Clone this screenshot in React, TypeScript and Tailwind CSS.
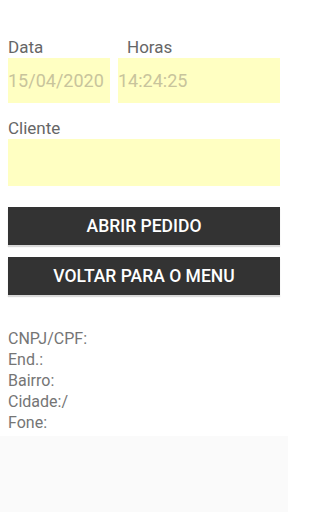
export default function App() {
  const info = ['CNPJ/CPF:', 'End.:', 'Bairro:', 'Cidade:/', 'Fone:']

  return (
    <div className="w-[288px] h-[512px] flex flex-col bg-[#fafafa] font-['Roboto',sans-serif]">
      <div className="bg-white px-2 pt-[36px] pb-[3px]">
        <div className="flex gap-2">
          <div className="w-[102px] flex flex-col">
            <span className="text-[17px] leading-[22px] text-[#666666]">Data</span>
            <div className="h-[45px] bg-[#ffffc2] flex items-center text-[18px] text-[#c8c49c]">15/04/2020</div>
          </div>
          <div className="flex-1 flex flex-col">
            <span className="text-[17px] leading-[22px] text-[#666666] pl-[9px]">Horas</span>
            <div className="h-[45px] bg-[#ffffc2] flex items-center text-[18px] text-[#c8c49c]">14:24:25</div>
          </div>
        </div>

        <div className="mt-[14px] text-[17px] leading-[22px] text-[#666666]">Cliente</div>
        <div className="h-[47px] bg-[#ffffc2]"></div>

        <button className="mt-[21px] w-full h-[38px] bg-[#333333] text-white text-[17.5px] font-medium shadow-[0_2px_1px_rgba(0,0,0,0.15)]">
          ABRIR PEDIDO
        </button>
        <button className="mt-[12px] w-full h-[38px] bg-[#333333] text-white text-[17.5px] font-medium shadow-[0_2px_1px_rgba(0,0,0,0.15)]">
          VOLTAR PARA O MENU
        </button>

        <div className="mt-[33px] flex flex-col text-[16px] leading-[21px] text-[#757575]">
          {info.map((line) => (
            <span key={line}>{line}</span>
          ))}
        </div>
      </div>
    </div>
  )
}
